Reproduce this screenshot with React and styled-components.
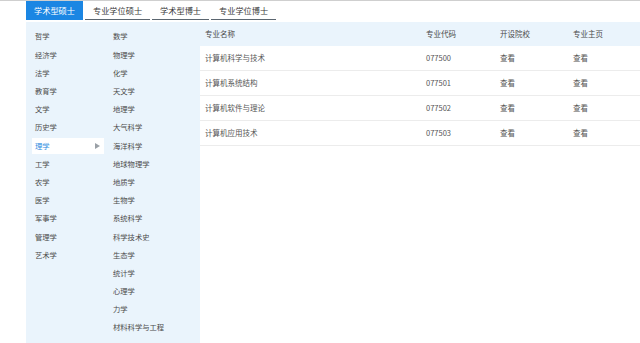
import React from "react";
import styled, { createGlobalStyle } from "styled-components";

const GlobalStyle = createGlobalStyle`
  html, body { margin: 0; padding: 0; background: #ffffff; }
  body { font-family: "Noto Sans CJK SC", "Noto Sans", sans-serif; color: #333; }
`;

const Page = styled.div`
  border-top: 1px solid #cfcfcf;
  min-height: 342px;
  background: #fff;
`;

const TabBar = styled.div`
  display: flex;
  gap: 2px;
  padding-left: 26px;
  height: 19px;
`;

const Tab = styled.div`
  padding: 0 8px;
  height: 19px;
  display: flex;
  align-items: center;
  font-size: 8.2px;
  line-height: 1;
  box-sizing: border-box;
  color: ${(p) => (p.$active ? "#ffffff" : "#3a3a3a")};
  background: ${(p) => (p.$active ? "#1b86e3" : "#ffffff")};
  border-bottom: 1px solid ${(p) => (p.$active ? "#1b86e3" : "#5b6670")};
`;

const Body = styled.div`
  display: flex;
  margin-top: 2px;
`;

const Sidebar = styled.div`
  margin-left: 26px;
  width: 174px;
  background: #eaf4fc;
  display: grid;
  grid-template-columns: 78px 1fr;
  padding-top: 6px;
  padding-bottom: 20px;
`;

const Column = styled.div`
  display: flex;
  flex-direction: column;
`;

const Item = styled.div`
  height: 16px;
  margin: 1.1px 0 1.1px 6px;
  padding: 0 4px 0 3px;
  display: flex;
  align-items: center;
  justify-content: space-between;
  font-size: 7.3px;
  line-height: 1;
  color: ${(p) => (p.$active ? "#2d8ce0" : "#4a4a4a")};
  background: ${(p) => (p.$active ? "#ffffff" : "transparent")};
`;

const SubItem = styled.div`
  height: 18.2px;
  padding-left: 9px;
  display: flex;
  align-items: center;
  font-size: 7.3px;
  line-height: 1;
  color: #4a4a4a;
`;

const Table = styled.div`
  flex: 1;
  display: flex;
  flex-direction: column;
`;

const Row = styled.div`
  display: grid;
  grid-template-columns: 221px 74px 73px 1fr;
  height: ${(p) => (p.$header ? "24px" : "25px")};
  align-items: center;
  background: ${(p) => (p.$header ? "#eaf4fc" : "#ffffff")};
  border-bottom: ${(p) => (p.$header ? "none" : "1px solid #ececec")};
  box-sizing: border-box;
`;

const Cell = styled.div`
  padding-left: 5px;
  font-size: 7.5px;
  line-height: 1;
  color: ${(p) => (p.$header ? "#4a4a4a" : "#555")};
`;

const Arrow = () => (
  <svg width="5" height="6" viewBox="0 0 5 6">
    <path d="M0 0 L5 3 L0 6 Z" fill="#9aa0a6" />
  </svg>
);

const categories = ["哲学", "经济学", "法学", "教育学", "文学", "历史学", "理学", "工学", "农学", "医学", "军事学", "管理学", "艺术学"];
const subjects = ["数学", "物理学", "化学", "天文学", "地理学", "大气科学", "海洋科学", "地球物理学", "地质学", "生物学", "系统科学", "科学技术史", "生态学", "统计学", "心理学", "力学", "材料科学与工程"];
const rows = [
  ["计算机科学与技术", "077500"],
  ["计算机系统结构", "077501"],
  ["计算机软件与理论", "077502"],
  ["计算机应用技术", "077503"],
];

export default function App() {
  return (
    <>
      <GlobalStyle />
      <Page>
        <TabBar>
          <Tab $active>学术型硕士</Tab>
          <Tab>专业学位硕士</Tab>
          <Tab>学术型博士</Tab>
          <Tab>专业学位博士</Tab>
        </TabBar>
        <Body>
          <Sidebar>
            <Column>
              {categories.map((c) => (
                <Item key={c} $active={c === "理学"}>
                  <span>{c}</span>
                  {c === "理学" && <Arrow />}
                </Item>
              ))}
            </Column>
            <Column>
              {subjects.map((s) => (
                <SubItem key={s}>{s}</SubItem>
              ))}
            </Column>
          </Sidebar>
          <Table>
            <Row $header>
              <Cell $header>专业名称</Cell>
              <Cell $header>专业代码</Cell>
              <Cell $header>开设院校</Cell>
              <Cell $header>专业主页</Cell>
            </Row>
            {rows.map(([name, code]) => (
              <Row key={code}>
                <Cell>{name}</Cell>
                <Cell>{code}</Cell>
                <Cell>查看</Cell>
                <Cell>查看</Cell>
              </Row>
            ))}
          </Table>
        </Body>
      </Page>
    </>
  );
}
